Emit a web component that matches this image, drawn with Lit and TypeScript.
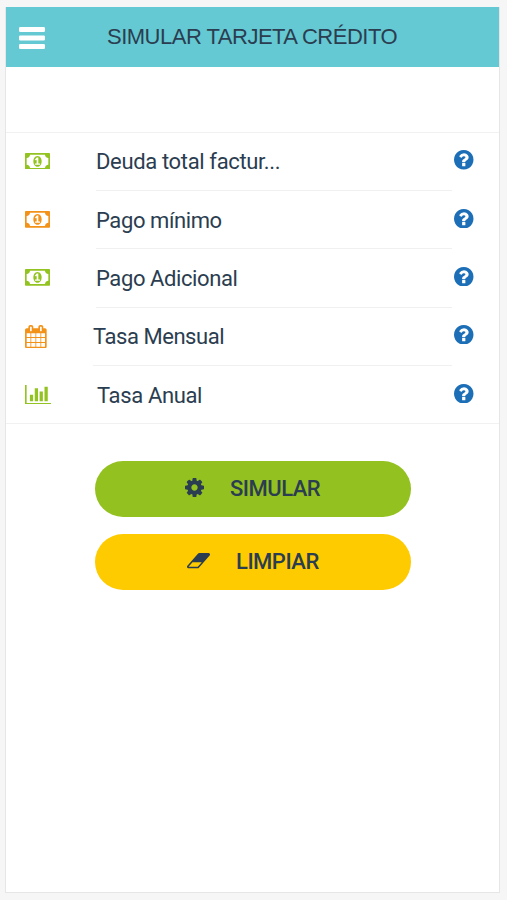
import { LitElement, html, css, svg } from "lit";
import { customElement, property } from "lit/decorators.js";

interface Glyph { box: string; w: number; h: number; d: string; }

// Each view box is the glyph's own bounding box, w and h are its drawn size.
const ICONS: Record<string, Glyph> = {
  bars: {
    box: "0 0 26 22", w: 26, h: 22,
    d: "M1.300 0h23.400q1.300 0 1.300 1.300v2.400q0 1.300-1.300 1.300h-23.400q-1.300 0-1.300-1.300v-2.400q0-1.300 1.300-1.300zM1.300 8.500h23.400q1.300 0 1.300 1.300v2.400q0 1.300-1.300 1.300h-23.400q-1.300 0-1.300-1.300v-2.400q0-1.300 1.300-1.300zM1.300 17h23.400q1.300 0 1.300 1.300v2.400q0 1.300-1.300 1.300h-23.400q-1.300 0-1.300-1.300v-2.400q0-1.300 1.300-1.300z",
  },
  money: {
    box: "0 256 1920 1280", w: 25, h: 16.7,
    d: "M768 1152h384v-96h-128v-448h-114l-148 137 77 80q42-37 55-57h2v288h-128v96zm512-256q0 70-21 142t-59.500 134-101.500 101-138 39-138-39-101.500-101-59.500-134-21-142 21-142 59.500-134 101.500-101 138-39 138 39 101.500 101 59.500 134 21 142zm512 256v-512q-106 0-181-75t-75-181h-1152q0 106-75 181t-181 75v512q106 0 181 75t75 181h1152q0-106 75-181t181-75zm128-832v1152q0 26-19 45t-45 19h-1792q-26 0-45-19t-19-45v-1152q0-26 19-45t45-19h1792q26 0 45 19t19 45z",
  },
  calendar: {
    box: "64 0 1664 1792", w: 21.7, h: 23.3,
    d: "M192 1664h288v-288h-288v288zm352 0h320v-288h-320v288zm-352-352h288v-320h-288v320zm352 0h320v-320h-320v320zm-352-384h288v-288h-288v288zm736 736h320v-288h-320v288zm-384-736h320v-288h-320v288zm768 736h288v-288h-288v288zm-384-352h320v-320h-320v320zm-352-864v-288q0-13-9.500-22.500t-22.500-9.500h-64q-13 0-22.500 9.500t-9.500 22.500v288q0 13 9.500 22.500t22.500 9.500h64q13 0 22.500-9.500t9.500-22.500zm736 864h288v-320h-288v320zm-384-384h320v-288h-320v288zm384 0h288v-288h-288v288zm32-480v-288q0-13-9.500-22.500t-22.500-9.500h-64q-13 0-22.500 9.500t-9.500 22.500v288q0 13 9.500 22.500t22.500 9.500h64q13 0 22.500-9.500t9.500-22.500zm384-64v1280q0 52-38 90t-90 38h-1408q-52 0-90-38t-38-90v-1280q0-52 38-90t90-38h128v-96q0-66 47-113t113-47h64q66 0 113 47t47 113v96h384v-96q0-66 47-113t113-47h64q66 0 113 47t47 113v96h128q52 0 90 38t38 90z",
  },
  chart: {
    box: "0 128 2048 1536", w: 26, h: 19.500,
    d: "M640 896v512h-256v-512h256zm384-512v1024h-256v-1024h256zm1024 1152v128h-2048v-1536h128v1408h1920zm-640-896v768h-256v-768h256zm384-384v1152h-256v-1152h256z",
  },
  help: {
    box: "128 128 1536 1536", w: 19.500, h: 19.500,
    d: "M1024 1376v-192q0-14-9-23t-23-9h-192q-14 0-23 9t-9 23v192q0 14 9 23t23 9h192q14 0 23-9t9-23zm256-672q0-88-55.500-163t-138.500-116-170.500-41q-243 0-371 213-15 24 8 42l132 100q7 6 19 6 16 0 25-12 53-68 86-92 34-24 86-24 48 0 85.500 26t37.500 59q0 38-20 61t-68 45q-63 28-115.500 86.500t-52.500 125.500v36q0 14 9 23t23 9h192q14 0 23-9t9-23q0-19 21.500-49.500t54.500-49.500q32-18 49-28.500t46-35 44.500-48 28-60.500 12.500-81zm384 192q0 209-103 385.500t-279.500 279.500-385.500 103-385.500-103-279.500-279.500-103-385.500 103-385.500 279.500-279.500 385.500-103 385.500 103 279.500 279.500 103 385.500z",
  },
  cog: {
    box: "128 128 1536 1536", w: 19, h: 19,
    d: "M1152 896q0-106-75-181t-181-75-181 75-75 181 75 181 181 75 181-75 75-181zm512-109v222q0 12-8 23t-20 13l-185 28q-19 54-39 91 35 50 107 138 10 12 10 25t-9 23q-27 37-99 108t-94 71q-12 0-26-9l-138-108q-44 23-91 38-16 136-29 186-7 28-36 28h-222q-14 0-24.500-8.500t-11.500-21.500l-28-184q-49-16-90-37l-141 107q-10 9-25 9-14 0-25-11-126-114-165-168-7-10-7-23 0-12 8-23 15-21 51-66.500t54-70.500q-27-50-41-99l-183-27q-13-2-21-12.500t-8-23.500v-222q0-12 8-23t19-13l186-28q14-46 39-92-40-57-107-138-10-12-10-24 0-10 9-23 26-36 98.500-107.500t94.500-71.500q13 0 26 10l138 107q44-23 91-38 16-136 29-186 7-28 36-28h222q14 0 24.500 8.500t11.500 21.500l28 184q49 16 90 37l142-107q9-9 24-9 13 0 25 10 129 119 165 170 7 8 7 22 0 12-8 23-15 21-51 66.500t-54 70.500q26 50 41 98l183 28q13 2 21 12.500t8 23.500z",
  },
  eraser: {
    box: "64 256 1920 1280", w: 23, h: 15.400,
    d: "M960 1408l336-384h-768l-336 384h768zm1013-1077q15 34 9.500 71.500t-30.500 65.500l-896 1024q-38 44-96 44h-768q-38 0-69.500-20.500t-47.500-54.500q-15-34-9.500-71.500t30.500-65.500l896-1024q38-44 96-44h768q38 0 69.500 20.500t47.500 54.500z",
  },
};

@customElement("app-icon")
export class AppIcon extends LitElement {
  @property() name = "bars";
  static styles = css`
    :host { display: inline-flex; flex: none; }
    svg { display: block; fill: currentColor; }
  `;
  render() {
    const g = ICONS[this.name];
    return html`<svg width=${g.w} height=${g.h} viewBox=${g.box} aria-hidden="true">${svg`<path d=${g.d}></path>`}</svg>`;
  }
}

interface Field { icon: string; tone: string; label: string; indent: string; }

const FIELDS: Field[] = [
  { icon: "money", tone: "green", label: "Deuda total factur...", indent: "" },
  { icon: "money", tone: "orange", label: "Pago mínimo", indent: "low" },
  { icon: "money", tone: "green", label: "Pago Adicional", indent: "low" },
  { icon: "calendar", tone: "orange", label: "Tasa Mensual", indent: "narrow" },
  { icon: "chart", tone: "green", label: "Tasa Anual", indent: "wide" },
];

@customElement("app-root")
export class AppRoot extends LitElement {
  static styles = css`
    :host {
      display: block;
      box-sizing: border-box;
      height: 900px;
      padding: 7px 7px 7px 5px;
      background: #f6f6f6;
      color: #2b3d50;
      font-family: Roboto, sans-serif;
    }
    .screen {
      box-sizing: border-box;
      height: 886px;
      background: #fff;
      border: solid #e6e6e6;
      border-width: 0 1px 1px;
    }
    header {
      box-sizing: border-box;
      display: flex;
      align-items: center;
      height: 60px;
      padding-left: 13px;
      background: #64c9d3;
    }
    .menu { color: #fff; margin-top: 2px; }
    h1 {
      margin: 0 0 0 62px;
      font: 400 22px/26px "Liberation Sans", sans-serif;
      letter-spacing: -0.5px;
      white-space: nowrap;
    }
    .fields {
      margin: 65px 0 0;
      padding: 0;
      list-style: none;
      border: solid #f1f1f1;
      border-width: 1px 0;
    }
    .row {
      display: flex;
      height: 58.2px;
      padding-left: 19px;
    }
    .row:last-child { height: 57.2px; }
    .lead { display: flex; align-items: center; width: 71px; padding-bottom: 2px; box-sizing: border-box; }
    .row.narrow .lead { width: 68px; padding-bottom: 0; }
    .row.wide .lead { padding-bottom: 0; }
    .label {
      box-sizing: border-box;
      flex: 1;
      display: flex;
      align-items: center;
      border-bottom: 1px solid #f0f0f0;
      font-size: 22px;
      line-height: 26px;
      letter-spacing: -0.35px;
      white-space: nowrap;
    }
    .row.low .label { padding-top: 2px; letter-spacing: -0.4px; }
    .row.narrow .label { padding-top: 2px; letter-spacing: -0.45px; }
    .row.wide .label { padding: 4px 0 0 1px; }
    .row:last-child .label { border-bottom-color: transparent; }
    .help { display: flex; align-items: center; width: 47px; padding-left: 2px; padding-bottom: 4px; box-sizing: border-box; color: #1c6fb7; }
    .row.wide .help { padding-bottom: 2px; }
    .green { color: #93c320; }
    .orange { color: #f39219; }
    .actions {
      display: grid;
      gap: 17px;
      width: 316px;
      margin: 37px 0 0 89px;
    }
    button {
      display: flex;
      align-items: center;
      justify-content: flex-start;
      height: 56px;
      padding: 0 0 1px 90px;
      border: 0;
      border-radius: 28px;
      color: inherit;
      font: 500 22px/26px Roboto, sans-serif;
      letter-spacing: -0.5px;
    }
    button span { padding-top: 1px; }
    button app-icon { margin-bottom: 1px; }
    .simulate { background: #93c11f; gap: 26px; }
    .clear { background: #fecb00; gap: 26px; padding-left: 92px; }
  `;

  render() {
    return html`
      <main class="screen">
        <header>
          <app-icon class="menu" name="bars"></app-icon>
          <h1>SIMULAR TARJETA CRÉDITO</h1>
        </header>
        <ul class="fields">
          ${FIELDS.map((f) => html`
            <li class="row ${f.indent}">
              <span class="lead ${f.tone}"><app-icon name=${f.icon}></app-icon></span>
              <span class="label">${f.label}</span>
              <span class="help"><app-icon name="help"></app-icon></span>
            </li>`)}
        </ul>
        <div class="actions">
          <button class="simulate"><app-icon name="cog"></app-icon><span>SIMULAR</span></button>
          <button class="clear"><app-icon name="eraser"></app-icon><span>LIMPIAR</span></button>
        </div>
      </main>`;
  }
}
